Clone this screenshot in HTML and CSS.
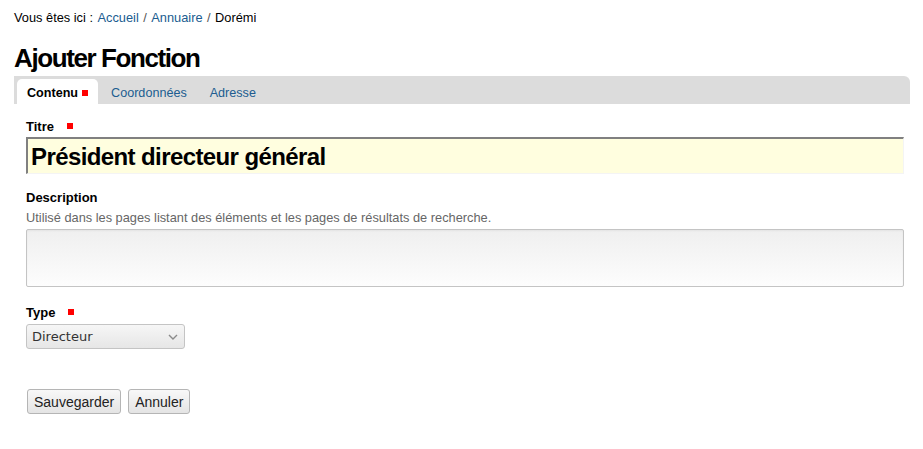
FILE: index.html
```html
<!DOCTYPE html>
<html lang="fr">
<head>
<meta charset="utf-8">
<title>Ajouter Fonction</title>
<link rel="stylesheet" href="styles.css">
</head>
<body>
<div class="page">
  <nav class="breadcrumbs">
    <span class="here">Vous êtes ici :</span>
    <a href="#">Accueil</a>
    <span class="sep">/</span>
    <a href="#">Annuaire</a>
    <span class="sep">/</span>
    <span class="current">Dorémi</span>
  </nav>
  <h1 class="title">Ajouter Fonction</h1>
  <div class="tabs">
    <a class="tab active" href="#">Contenu <span class="req"></span></a>
    <a class="tab" href="#">Coordonnées</a>
    <a class="tab" href="#">Adresse</a>
  </div>
  <form class="form">
    <div class="field field-title">
      <label class="label">Titre <span class="req"></span></label>
      <input class="title-input" type="text" value="Président directeur général">
    </div>
    <div class="field field-desc">
      <label class="label">Description</label>
      <div class="help">Utilisé dans les pages listant des éléments et les pages de résultats de recherche.</div>
      <div class="textarea"></div>
    </div>
    <div class="field field-type">
      <label class="label">Type <span class="req"></span></label>
      <div class="select">
        <span class="select-text">Directeur</span>
        <svg class="chev" width="10" height="6" viewBox="0 0 10 6"><path d="M1 1 L5 5 L9 1" fill="none" stroke="#8a8a8a" stroke-width="1.4"/></svg>
      </div>
    </div>
    <div class="actions">
      <button class="btn" type="button">Sauvegarder</button>
      <button class="btn" type="button">Annuler</button>
    </div>
  </form>
</div>
</body>
</html>
```
FILE: styles.css
```css
html, body {
  margin: 0;
  padding: 0;
  background: #fff;
}
body {
  font-family: "Liberation Sans", Arial, sans-serif;
  color: #000;
}
.page {
  padding: 0 13px 0 14px;
}
.breadcrumbs {
  font-size: 12.8px;
  line-height: 16px;
  padding-top: 10px;
  display: flex;
  gap: 4.5px;
}
.breadcrumbs a {
  color: #205c90;
  text-decoration: none;
}
.breadcrumbs .sep {
  color: #555;
}
.title {
  font-size: 26px;
  font-weight: bold;
  letter-spacing: -1.4px;
  line-height: 30px;
  margin: 17px 0 0 0;
}
.tabs {
  margin-top: 3px;
  height: 28px;
  background: #dcdcdc;
  border-top-right-radius: 6px;
  display: flex;
  align-items: flex-end;
  padding-left: 3px;
}
.tab {
  box-sizing: border-box;
  font-size: 12.6px;
  line-height: 16px;
  height: 25px;
  padding: 3px 10px 0 10px;
  color: #205c90;
  text-decoration: none;
  display: flex;
  align-items: center;
  gap: 4px;
  margin-right: 3px;
}
.tab.active {
  background: #fff;
  color: #000;
  font-weight: bold;
  border-radius: 5px 5px 0 0;
}
.req {
  display: inline-block;
  width: 6px;
  height: 6px;
  background: #f00;
}
.form {
  padding: 15px 6px 0 12px;
}
.label {
  display: block;
  font-size: 13px;
  font-weight: bold;
  line-height: 16px;
}
.label .req {
  margin-left: 9px;
  vertical-align: 2px;
}
.title-input {
  display: block;
  box-sizing: border-box;
  width: 100%;
  height: 37px;
  margin-top: 2px;
  background: #fffedf;
  border-style: solid;
  border-width: 2px 1px 1px 2px;
  border-color: #808080 #f4f4f4 #f4f4f4 #808080;
  font-family: "Liberation Sans", Arial, sans-serif;
  font-size: 24px;
  font-weight: bold;
  letter-spacing: -0.6px;
  padding: 2px 3px 0 3px;
  color: #000;
  outline: none;
}
.field-desc {
  margin-top: 16px;
}
.help {
  font-size: 12.8px;
  color: #666;
  line-height: 16px;
  margin-top: 4px;
}
.textarea {
  box-sizing: border-box;
  height: 58px;
  margin-top: 3px;
  border: 1px solid #c4c4c4;
  border-radius: 2px;
  background: linear-gradient(#efefef, #fdfdfd);
  box-shadow: inset 0 1px 2px rgba(0,0,0,0.05);
}
.field-type {
  margin-top: 18px;
}
.select {
  box-sizing: border-box;
  width: 159px;
  height: 25px;
  margin-top: 3px;
  border: 1px solid #c4c4c4;
  border-radius: 3px;
  background: linear-gradient(#f6f6f6, #e6e6e6);
  display: flex;
  align-items: center;
  justify-content: space-between;
  padding: 0 6px 0 5px;
  font-family: "DejaVu Sans", sans-serif;
  font-size: 13px;
  color: #333;
}
.actions {
  margin-top: 40px;
  display: flex;
  gap: 7px;
}
.btn {
  height: 25px;
  font-family: "Liberation Sans", Arial, sans-serif;
  font-size: 14px;
  color: #222;
  background: linear-gradient(#f8f8f8, #e4e4e4);
  border: 1px solid #b5b5b5;
  border-radius: 3px;
  padding: 0 6px;
  margin: 0 0 0 1px;
}
.btn + .btn {
  margin-left: 0;
}
```
